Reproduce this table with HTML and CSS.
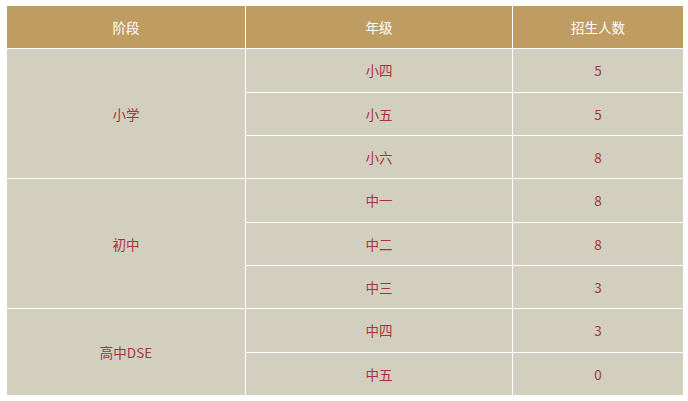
FILE: index.html
```html
<!DOCTYPE html>
<html lang="zh">
<head>
<meta charset="utf-8">
<title>招生人数</title>
<link rel="stylesheet" href="styles.css">
</head>
<body>
<table class="enroll">
  <colgroup>
    <col class="c1"><col class="c2"><col class="c3">
  </colgroup>
  <thead>
    <tr><th>阶段</th><th>年级</th><th>招生人数</th></tr>
  </thead>
  <tbody>
    <tr><td rowspan="3">小学</td><td>小四</td><td>5</td></tr>
    <tr><td>小五</td><td>5</td></tr>
    <tr><td>小六</td><td>8</td></tr>
    <tr><td rowspan="3">初中</td><td>中一</td><td>8</td></tr>
    <tr><td>中二</td><td>8</td></tr>
    <tr><td>中三</td><td>3</td></tr>
    <tr><td rowspan="2">高中DSE</td><td>中四</td><td>3</td></tr>
    <tr><td>中五</td><td>0</td></tr>
  </tbody>
</table>
</body>
</html>
```
FILE: styles.css
```css
html, body {
  margin: 0;
  padding: 0;
  background: #fff;
}
body {
  padding: 5px 5px 0 6px;
  font-family: "Noto Sans CJK SC", "Noto Sans", sans-serif;
  font-size: 13.5px;
}
.enroll {
  border-collapse: collapse;
  width: 677px;
  table-layout: fixed;
}
.c1 { width: 239px; }
.c2 { width: 267px; }
.c3 { width: 171px; }
.enroll th,
.enroll td {
  border: 1px solid #fff;
  text-align: center;
  vertical-align: middle;
  padding: 0;
  height: 42.33px;
  line-height: 20px;
}
.enroll th {
  background: #bf9d62;
  color: #fff;
  font-weight: normal;
}
.enroll td {
  background: #d2cfbe;
  color: #a8323e;
}
```
